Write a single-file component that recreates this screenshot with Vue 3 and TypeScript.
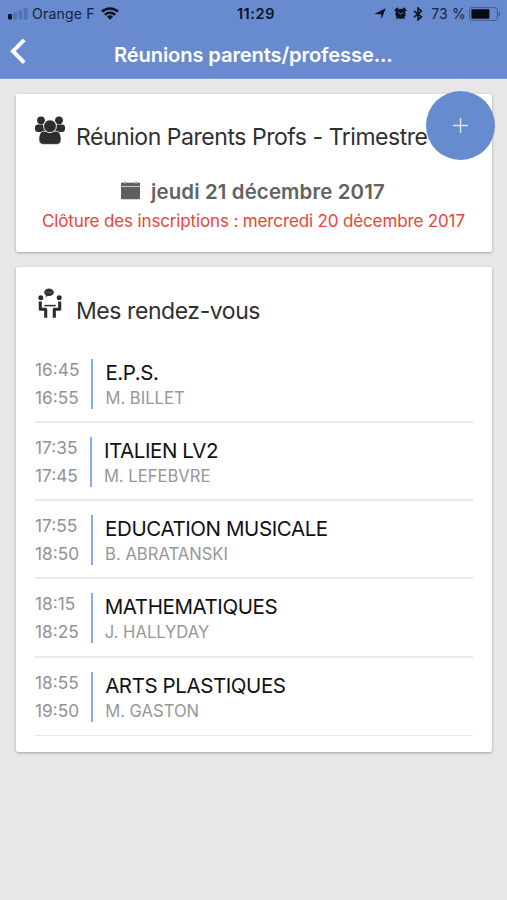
<script setup lang="ts">
interface Meeting {
  start: string
  end: string
  subject: string
  teacher: string
}

const meetings: Meeting[] = [
  { start: '16:45', end: '16:55', subject: 'E.P.S.', teacher: 'M. BILLET' },
  { start: '17:35', end: '17:45', subject: 'ITALIEN LV2', teacher: 'M. LEFEBVRE' },
  { start: '17:55', end: '18:50', subject: 'EDUCATION MUSICALE', teacher: 'B. ABRATANSKI' },
  { start: '18:15', end: '18:25', subject: 'MATHEMATIQUES', teacher: 'J. HALLYDAY' },
  { start: '18:55', end: '19:50', subject: 'ARTS PLASTIQUES', teacher: 'M. GASTON' },
]
</script>

<template>
  <div class="screen">
    <header class="top">
      <div class="status">
        <div class="status-left">
          <svg class="signal" width="20" height="12" viewBox="0 0 20 12">
            <rect x="0" y="6" width="4" height="5.5" rx="1" fill="#0b1222" />
            <rect x="5.3" y="4.3" width="3.8" height="7.2" rx="1" fill="#5373b0" />
            <rect x="10.5" y="2.3" width="3.8" height="9.2" rx="1" fill="#5373b0" />
            <rect x="15.7" y="0.3" width="3.8" height="11.2" rx="1" fill="#5373b0" />
          </svg>
          <span class="carrier">Orange F</span>
          <svg class="wifi" width="18" height="13" viewBox="0 0 18 13">
            <g fill="none" stroke="#0b1222" stroke-width="2.5">
              <path d="M1 4.7a11.4 11.4 0 0 1 16 0" />
              <path d="M3.9 7.9a7.3 7.3 0 0 1 10.2 0" />
            </g>
            <path d="M9 12.8 6 9.8a4.3 4.3 0 0 1 6 0z" fill="#0b1222" />
          </svg>
        </div>
        <span class="clock">11:29</span>
        <div class="status-right">
          <svg width="12" height="12" viewBox="0 0 12 12"><path d="M11.8.2 7.3 11.6V6.2L.2 6z" fill="#0b1222" /></svg>
          <svg class="alarm" width="13" height="13" viewBox="0 0 13 13">
            <circle cx="6.5" cy="6.9" r="5.1" fill="#0b1222" />
            <path d="M.9 4.1A9 9 0 0 1 4 1.1M12.1 4.1A9 9 0 0 0 9 1.1" stroke="#0b1222" stroke-width="1.9" fill="none" />
            <path d="m3.2 10.8-.8 1M9.8 10.8l.8 1" stroke="#0b1222" stroke-width="1.4" fill="none" />
            <path d="M4.4 5.2 6.5 7.2 9 5.7" stroke="#678bce" stroke-width=".9" fill="none" />
          </svg>
          <svg class="bluetooth" width="10" height="14" viewBox="0 0 10 14"><path d="m1 3.8 7.4 6L5 13V1l3.4 3.2L1 10.2" fill="none" stroke="#0b1222" stroke-width="1.6" /></svg>
          <span class="percent">73 %</span>
          <svg class="battery" width="32" height="14" viewBox="0 0 32 14">
            <rect x=".6" y=".6" width="27.8" height="12.8" rx="2.6" fill="none" stroke="#3f5b91" stroke-width="1" />
            <rect x="2.4" y="2.3" width="18" height="9.4" rx="1" fill="#070a12" />
            <path d="M29.6 4.8c2 .5 2 3.9 0 4.4z" fill="#3f5b91" />
          </svg>
        </div>
      </div>
      <div class="navbar">
        <svg class="back" width="17" height="27" viewBox="0 0 17 27"><path d="M15.2 1.8 4 13.2 15.2 24.6" fill="none" stroke="#fff" stroke-width="4" /></svg>
        <h1>Réunions parents/professe...</h1>
      </div>
    </header>

    <main>
      <section class="card event">
        <div class="heading">
          <svg class="group" width="30" height="29" viewBox="0 0 30 29" fill="#2d2d2d">
            <circle cx="6" cy="4.3" r="3.9" /><circle cx="24" cy="4.3" r="3.9" />
            <rect x="0" y="8.5" width="10.5" height="7.5" rx="3" />
            <rect x="19.5" y="8.5" width="10.5" height="7.5" rx="3" />
            <path d="M8.8 15.2h12.4c3.2 0 4.9 3.5 4.9 8.4 0 3.2-1.7 4.8-4.4 4.8H8.3c-2.7 0-4.4-1.6-4.4-4.8 0-4.9 1.7-8.4 4.9-8.4z" stroke="#fff" stroke-width=".7" />
            <circle cx="15" cy="10.2" r="6.4" stroke="#fff" stroke-width=".9" />
          </svg>
          <h2 class="event-title">Réunion Parents Profs - Trimestre</h2>
        </div>
        <div class="date">
          <svg width="19" height="19" viewBox="0 0 19 19" fill="#5e5e5e">
            <path d="M0 1.7h19v3.4H0z" /><path d="M0 5.8h19v11.5q0 1-1 1H1q-1 0-1-1z" />
            <path d="M3 .6h1.8v2.2H3zM14.2.6H16v2.2h-1.8z" fill="#a5a5a5" />
          </svg>
          <strong>jeudi 21 décembre 2017</strong>
        </div>
        <p class="deadline">Clôture des inscriptions : mercredi 20 décembre 2017</p>
        <button class="add" type="button">
          <svg width="15" height="15" viewBox="0 0 15 15"><path d="M7.5 0v15M0 7.5h15" stroke="#dfe8fa" stroke-width="1.4" /></svg>
        </button>
      </section>

      <section class="card agenda">
        <div class="heading">
          <svg class="talk" width="24" height="31" viewBox="0 0 24 31">
            <ellipse cx="11" cy="4.3" rx="4.8" ry="3.7" fill="#303030" />
            <path d="m8 6-.5 3.3L11 7z" fill="#303030" />
            <path d="M8.2 4.3h5.6" stroke="#777" stroke-width="1" stroke-dasharray="1.4 .7" />
            <circle cx="2.8" cy="9.7" r="2.5" fill="#2d2d2d" /><circle cx="21.2" cy="9.7" r="2.5" fill="#2d2d2d" />
            <path d="M2.3 13.5v7.7h5.4v8.5M21.7 13.5v7.7h-5.4v8.5" fill="none" stroke="#2d2d2d" stroke-width="3.1" stroke-linejoin="round" />
            <path d="M6.3 17.6h11.4" stroke="#2d2d2d" stroke-width="1.5" />
          </svg>
          <h2 class="agenda-title">Mes rendez-vous</h2>
        </div>
        <ul>
          <li v-for="m in meetings" :key="m.start">
            <div class="times"><span>{{ m.start }}</span><span>{{ m.end }}</span></div>
            <div class="info">
              <span class="subject">{{ m.subject }}</span>
              <span class="teacher">{{ m.teacher }}</span>
            </div>
          </li>
        </ul>
      </section>
    </main>
  </div>
</template>

<style>
body { background: #e7e7e7; }
</style>

<style scoped>
.screen {
  width: 507px;
  height: 900px;
  overflow: hidden;
  background: #e7e7e7;
  font-family: Inter, "Liberation Sans", sans-serif;
  white-space: nowrap;
}
.screen * { box-sizing: border-box; }
.top {
  height: 79px;
  background: #678bce;
  border-bottom: 1px solid #7f9dd6;
}
.status {
  display: grid;
  grid-template-columns: 1fr auto 1fr;
  align-items: center;
  height: 27px;
  padding: 0 6px 0 8px;
  color: #0b1222;
  font-size: 14px;
}
.status-left, .status-right { display: flex; align-items: center; }
.status-right { justify-content: flex-end; }
.carrier { margin-left: 4px; letter-spacing: 0.2px; color: #15223e; }
.wifi { margin-left: 6px; }
.clock { margin-left: 3px; font-weight: 600; font-size: 14.5px; letter-spacing: 0.6px; }
.alarm { margin-left: 8px; }
.bluetooth { margin-left: 6px; }
.percent { margin-left: 8px; color: #15223e; letter-spacing: 0.2px; }
.battery { margin-left: 3px; }
.navbar {
  display: flex;
  align-items: center;
  height: 51px;
  padding-left: 9px;
}
.back { margin-top: -3px; }
h1 {
  margin: 5px 0 0 88px;
  color: #fff;
  font-size: 20.2px;
  font-weight: 600;
  line-height: 30px;
  letter-spacing: -0.15px;
}
main {
  display: flex;
  flex-direction: column;
  gap: 15px;
  padding: 15px 15px 0 16px;
}
.card {
  position: relative;
  background: #fff;
  border-radius: 2px;
  box-shadow: 0 1px 3px rgba(0, 0, 0, 0.3);
}
.event { height: 158px; padding: 22px 0 0 20px; }
.agenda { height: 485px; padding: 21px 19px 0; }
.heading { display: flex; }
.group { margin-left: -1px; }
h2 {
  margin: 5px 0 0 11px;
  color: #303030;
  font-size: 23px;
  font-weight: 400;
  line-height: 32px;
}
.event-title { letter-spacing: -0.46px; }
.talk { margin-left: 3px; }
.agenda-title { margin: 7px 0 0 14px; letter-spacing: -0.43px; }
.date {
  display: flex;
  align-items: center;
  gap: 11px;
  height: 30px;
  margin: 24px 0 0 85px;
  color: #626262;
  font-size: 20.4px;
}
.date svg { margin-top: -4px; }
.date strong { font-weight: 600; letter-spacing: 0.14px; margin-top: -1px; }
.deadline {
  margin: 2px 0 0 6px;
  color: #e8453a;
  font-size: 17px;
  line-height: 24px;
  letter-spacing: -0.14px;
}
.add {
  position: absolute;
  top: -3px;
  right: -3px;
  display: flex;
  align-items: center;
  justify-content: center;
  width: 69px;
  height: 69px;
  padding: 0;
  border: 0;
  border-radius: 50%;
  background: #668bcf;
}
ul { margin: 18px 0 0; padding: 0; list-style: none; }
li {
  display: flex;
  height: 78.15px;
  padding-top: 14px;
  border-bottom: 2px solid #e9e9e9;
}
li:last-child { border-bottom-width: 1px; }
.times {
  display: flex;
  flex-direction: column;
  padding-right: 12px;
  color: #929292;
  font-size: 17.3px;
  line-height: 28px;
  margin-top: -3px;
}
.info {
  display: flex;
  flex-direction: column;
  height: 50px;
  padding-left: 12px;
  border-left: 2px solid #8aa8ec;
}
.subject { padding-top: 1px; color: #111; font-size: 20.5px; line-height: 26px; letter-spacing: -0.41px; }
.teacher { color: #979797; font-size: 16.6px; line-height: 25px; }
</style>
